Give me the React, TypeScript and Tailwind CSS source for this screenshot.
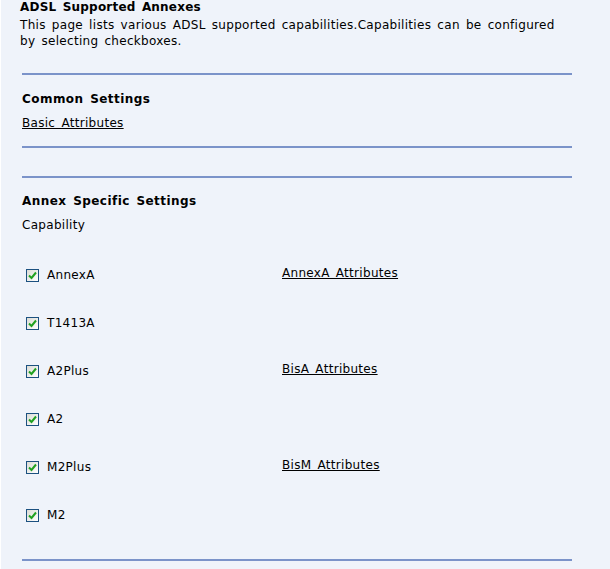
import React from "react";

const Check = () => (
  <span className="inline-flex h-[13px] w-[13px] shrink-0 items-center justify-center border border-[#1c5180] bg-gradient-to-br from-[#dcdcd5] to-[#ffffff]">
    <svg width="9" height="9" viewBox="0 0 9 9">
      <path d="M1 4.5 L3.5 7 L8 1.5" fill="none" stroke="#21a121" strokeWidth="2" />
    </svg>
  </span>
);

const rows: { name: string; link?: string }[] = [
  { name: "AnnexA", link: "AnnexA Attributes" },
  { name: "T1413A" },
  { name: "A2Plus", link: "BisA Attributes" },
  { name: "A2" },
  { name: "M2Plus", link: "BisM Attributes" },
  { name: "M2" },
];

const Hr = () => <div className="ml-[21px] h-[2px] w-[550px] bg-[#7b93c9]" />;

export default function App() {
  return (
    <div
      className="h-[569px] w-[610px] overflow-hidden border-l border-white bg-[#eff3fa] text-[12px] tracking-[0.3px] [word-spacing:2px] text-black"
      style={{ fontFamily: '"DejaVu Sans", Verdana, sans-serif' }}
    >
      <div className="pl-[19px] pt-0">
        <div className="-mt-[1px] font-bold leading-[16px] tracking-[0.2px]">ADSL Supported Annexes</div>
        <div className="mt-[2px] leading-[16px]">
          This page lists various ADSL supported capabilities.Capabilities can be configured
          <br />
          by selecting checkboxes.
        </div>
      </div>
      <div className="mt-[24px]">
        <Hr />
      </div>
      <div className="pl-[21px]">
        <div className="mt-[16px] font-bold leading-[16px] tracking-[0.45px]">Common Settings</div>
        <div className="mt-[8px] leading-[16px]">
          <a className="underline">Basic Attributes</a>
        </div>
      </div>
      <div className="mt-[15px]">
        <Hr />
      </div>
      <div className="mt-[28px]">
        <Hr />
      </div>
      <div className="pl-[21px]">
        <div className="mt-[15px] font-bold leading-[16px] tracking-[0.45px]">Annex Specific Settings</div>
        <div className="mt-[8px] leading-[16px]">Capability</div>
      </div>
      <div className="mt-[18px] flex flex-col pl-[25px]">
        {rows.map((r) => (
          <div key={r.name} className="flex h-[48px] items-center">
            <div className="flex w-[256px] items-center">
              <Check />
              <span className="ml-[8px] leading-[16px]">{r.name}</span>
            </div>
            {r.link && (
              <a className="-mt-[4px] underline leading-[16px]">{r.link}</a>
            )}
          </div>
        ))}
      </div>
      <div className="mt-[20px]">
        <Hr />
      </div>
    </div>
  );
}
